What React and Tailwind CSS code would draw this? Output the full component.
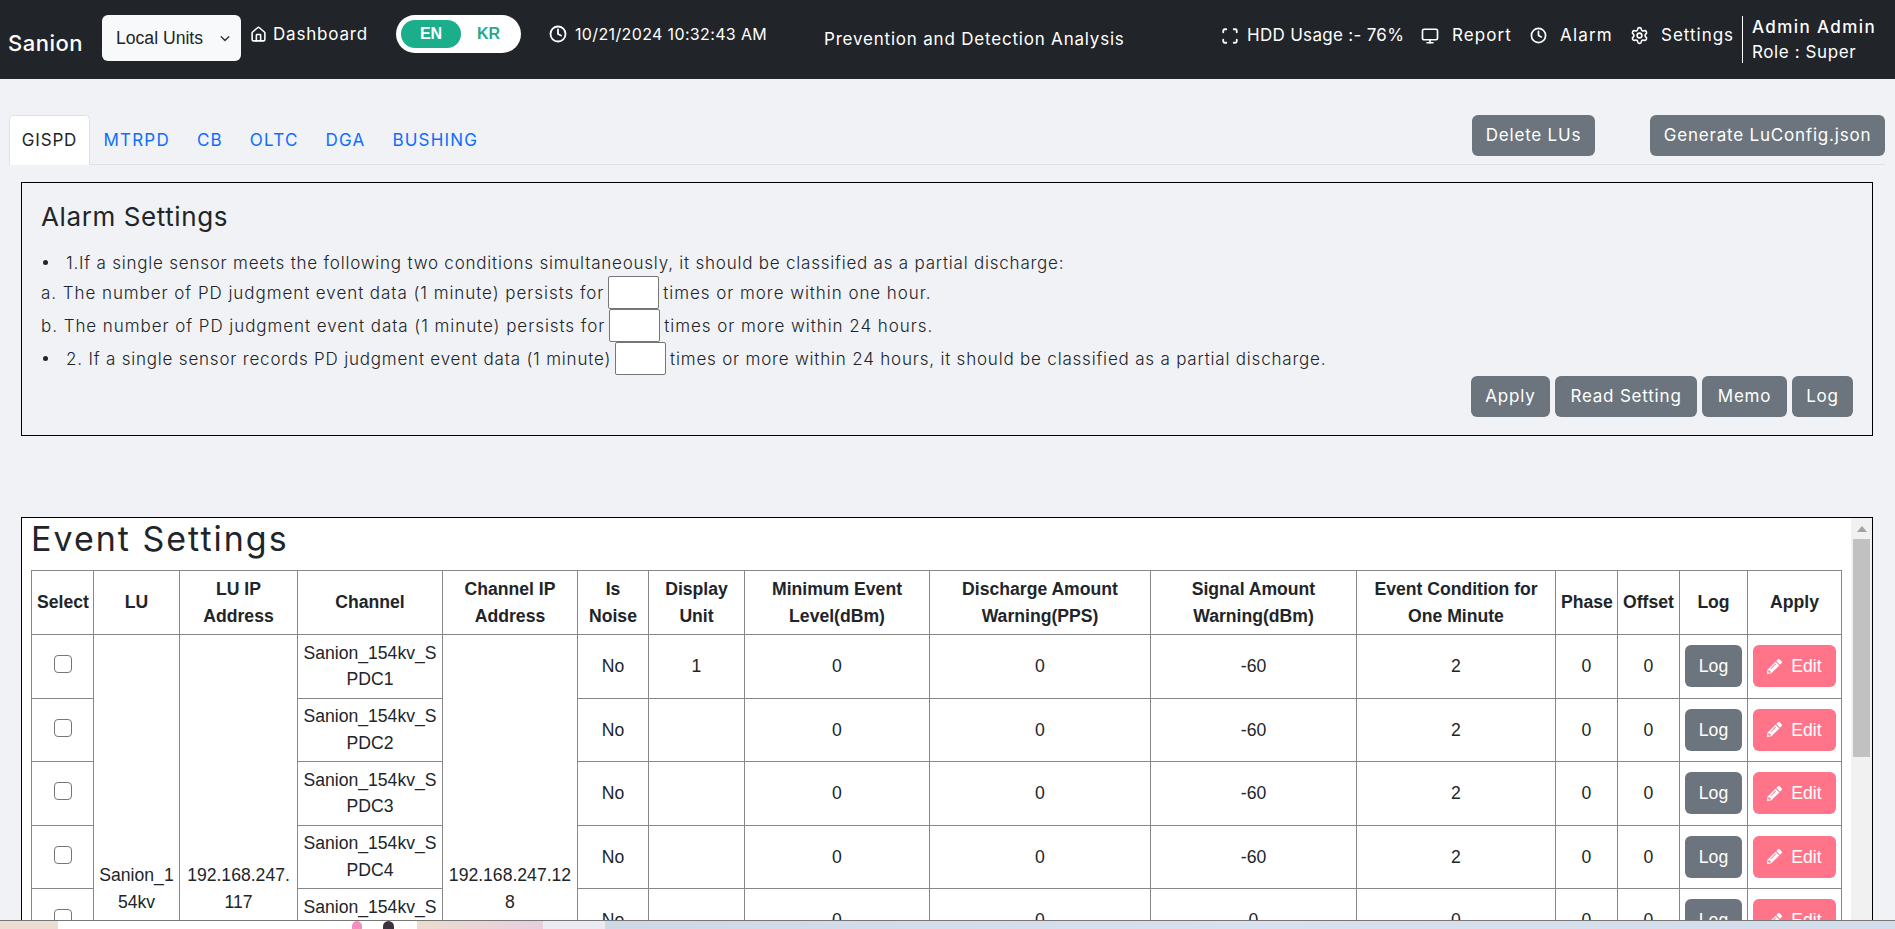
import React from "react";
import { House, Clock, Monitor, Settings, Scan } from "lucide-react";
import { FaPencilAlt } from "react-icons/fa";

const mont = "font-['Inter','Open_Sans',sans-serif]";
const tabs = ["MTRPD", "CB", "OLTC", "DGA", "BUSHING"];
const cols = ["w-[62px]","w-[86px]","w-[118px]","w-[145px]","w-[135px]","w-[71px]","w-[96px]","w-[185px]","w-[221px]","w-[206px]","w-[199px]","w-[62px]","w-[62px]","w-[68px]","w-[94px]"];
const heads = ["Select","LU","LU IP Address","Channel","Channel IP Address","Is Noise","Display Unit","Minimum Event Level(dBm)","Discharge Amount Warning(PPS)","Signal Amount Warning(dBm)","Event Condition for One Minute","Phase","Offset","Log","Apply"];
const rows = [1,2,3,4,5,6,7,8];
const td = "border border-[#888] text-center align-middle px-[5px] py-0 h-[63.5px]";

function Btn({ children, className = "" }) {
  return <button className={`h-[41px] rounded-[6px] bg-[#6c757d] text-[17px] tracking-[0.8px] text-white ${className}`}>{children}</button>;
}

export default function App() {
  return (
    <div className={`relative h-[929px] overflow-hidden bg-[#f0f2f6] text-[#212529] ${mont}`}>
      <header className="flex h-[79px] items-center bg-[#212529] text-[17px] tracking-[0.8px] text-white">
        <span className="ml-[8px] mt-[7px] w-[75px] text-[22px] font-medium tracking-[0.5px]">Sanion</span>
        <div className="mb-[3px] ml-[19px] flex h-[46px] w-[139px] items-center justify-between rounded-[6px] bg-[#f8f9fa] pl-[14px] pr-[10px] pt-[1px] font-['Liberation_Sans',sans-serif] text-[17.6px] tracking-normal text-[#212529]">
          Local Units
          <svg width="12" height="12" viewBox="0 0 16 16" fill="none" stroke="#343a40" strokeWidth="2" strokeLinecap="round" strokeLinejoin="round"><path d="m3 5 5 5 5-5" /></svg>
        </div>
        <div className="mb-[10px] ml-[9px] flex items-center gap-[6px]">
          <House size={17} strokeWidth={2.2} />
          <span className="w-[95px] whitespace-nowrap">Dashboard</span>
        </div>
        <div className="mb-[11px] ml-[28px] flex h-[38px] w-[125px] items-center rounded-full bg-white pl-[5px] font-['Liberation_Sans',sans-serif] text-[16px] font-bold tracking-normal">
          <span className="flex h-[28px] w-[60px] items-center justify-center rounded-full bg-[#1aae8b] text-white">EN</span>
          <span className="ml-[16px] text-[#2aa98a]">KR</span>
        </div>
        <div className="mb-[12px] ml-[28px] flex items-center gap-[8px]">
          <Clock size={18} strokeWidth={2.4} />
          <span className="w-[192px] whitespace-nowrap text-[16px] tracking-[0.36px]">10/21/2024 10:32:43 AM</span>
        </div>
        <span className="ml-[57px] w-[301px] whitespace-nowrap">Prevention and Detection Analysis</span>
        <div className="mb-[8px] ml-[96px] flex items-center">
          <Scan size={18} strokeWidth={2.4} />
          <span className="ml-[8px] w-[156px] whitespace-nowrap tracking-[0.3px]">HDD Usage :- 76%</span>
          <Monitor size={18} strokeWidth={2.2} className="ml-[18px]" />
          <span className="ml-[13px] w-[60px] tracking-[1.1px]">Report</span>
          <Clock size={17} strokeWidth={2.4} className="ml-[18px]" />
          <span className="ml-[13px] w-[53px] tracking-[1.2px]">Alarm</span>
          <Settings size={19} strokeWidth={2} className="ml-[17px]" />
          <span className="ml-[12px] w-[73px] tracking-[1px]">Settings</span>
        </div>
        <div className="ml-[8px] flex h-[47px] flex-col justify-between border-l border-white pl-[9px] leading-[22px]">
          <span className="whitespace-nowrap font-medium tracking-[1.4px]">Admin Admin</span>
          <span className="mt-[1px] whitespace-nowrap tracking-[0.6px]">Role : Super</span>
        </div>
      </header>

      <div className="ml-[9px] mr-[10px] mt-[36px] flex h-[50px] border-b border-[#dee2e6] text-[17px] tracking-[0.8px]">
        <div className="flex h-[50px] w-[81px] items-center justify-center rounded-t-[5px] border border-b-0 border-[#dee2e6] bg-white pt-[1px]">GISPD</div>
        {tabs.map((t) => (
          <div key={t} className="flex h-[49px] items-center px-[13.5px] pt-[3px] tracking-[1.2px] text-[#0d6efd] first:ml-[1px]">{t}</div>
        ))}
        <div className="ml-auto flex items-start">
          <Btn className="w-[123px]">Delete LUs</Btn>
          <Btn className="ml-[55px] w-[235px]">Generate LuConfig.json</Btn>
        </div>
      </div>

      <section className="ml-[21px] mt-[17px] flex h-[254px] w-[1852px] flex-col border border-black px-[19px]">
        <h2 className="mt-[17px] text-[26px] leading-[34px] tracking-[0.6px]">Alarm Settings</h2>
        <div className="mt-[15px] text-[17px] font-light leading-[24px] tracking-[0.78px]">
          <div className="flex h-[27px] items-center">
            <span className="ml-[2px] mr-[18px] h-[5px] w-[5px] rounded-full bg-[#212529]" />
            1.If a single sensor meets the following two conditions simultaneously, it should be classified as a partial discharge:
          </div>
          <div className="flex h-[33px] items-center tracking-[0.94px]">
            a. The number of PD judgment event data (1 minute) persists for
            <span className="mx-[4px] h-[33px] w-[51px] shrink-0 rounded-[2px] border border-[#767676] bg-white" />
            times or more within one hour.
          </div>
          <div className="flex h-[33px] items-center tracking-[0.94px]">
            b. The number of PD judgment event data (1 minute) persists for
            <span className="mx-[4px] h-[33px] w-[51px] shrink-0 rounded-[2px] border border-[#767676] bg-white" />
            times or more within 24 hours.
          </div>
          <div className="flex h-[33px] items-center tracking-[0.8px]">
            <span className="ml-[2px] mr-[18px] h-[5px] w-[5px] rounded-full bg-[#212529]" />
            2. If a single sensor records PD judgment event data (1 minute)
            <span className="mx-[4px] h-[33px] w-[51px] shrink-0 rounded-[2px] border border-[#767676] bg-white" />
            times or more within 24 hours, it should be classified as a partial discharge.
          </div>
        </div>
        <div className="mt-[1px] flex justify-end gap-[5px]">
          <Btn className="w-[79px]">Apply</Btn>
          <Btn className="w-[142px]">Read Setting</Btn>
          <Btn className="w-[85px]">Memo</Btn>
          <Btn className="w-[61px]">Log</Btn>
        </div>
      </section>

      <section className="relative ml-[21px] mt-[81px] h-[500px] w-[1852px] overflow-hidden border border-black bg-white pl-[9px]">
        <h2 className="h-[52px] text-[34px] leading-[42px] tracking-[2px]">Event Settings</h2>
        <table className="w-[1810px] table-fixed border-collapse font-['Liberation_Sans',sans-serif] text-[17.6px] leading-[26.4px]">
          <colgroup>{cols.map((c, i) => <col key={i} className={c} />)}</colgroup>
          <thead>
            <tr>
              {heads.map((h) => <th key={h} className="h-[64px] border border-[#888] px-[5px] py-0 text-center align-middle font-bold">{h}</th>)}
            </tr>
          </thead>
          <tbody>
            {rows.map((r) => (
              <tr key={r}>
                <td className={td}><span className="mb-[6px] inline-block h-[18px] w-[18px] rounded-[4px] border border-[#767676] bg-white align-middle" /></td>
                {r === 1 && <td rowSpan={8} className={`${td} break-all`}>Sanion_154kv</td>}
                {r === 1 && <td rowSpan={8} className={`${td} break-all`}>192.168.247.117</td>}
                <td className={`${td} break-all`}>Sanion_154kv_SPDC{r}</td>
                {r === 1 && <td rowSpan={8} className={`${td} break-all`}>192.168.247.128</td>}
                <td className={td}>No</td>
                <td className={td}>{r === 1 ? "1" : ""}</td>
                <td className={td}>0</td>
                <td className={td}>0</td>
                <td className={td}>{r < 5 ? "-60" : "0"}</td>
                <td className={td}>{r < 5 ? "2" : "0"}</td>
                <td className={td}>0</td>
                <td className={td}>0</td>
                <td className={td}>
                  <button className="h-[42px] w-[57px] rounded-[6px] bg-[#6c757d] text-white">Log</button>
                </td>
                <td className={td}>
                  <button className="inline-flex h-[42px] w-[83px] items-center justify-center gap-[9px] rounded-[6px] bg-[#ff7488] text-white">
                    <FaPencilAlt size={15} />Edit
                  </button>
                </td>
              </tr>
            ))}
          </tbody>
        </table>
        <div className="absolute right-0 top-0 flex h-full w-[21px] flex-col items-center bg-[#f1f1f1]">
          <svg className="mt-[8px]" width="10" height="6" viewBox="0 0 10 6"><path d="M5 0 10 6H0Z" fill="#a3a3a3" /></svg>
          <div className="mt-[7px] h-[218px] w-[17px] bg-[#c1c1c1]" />
        </div>
      </section>

      <div className="absolute bottom-0 left-0 flex h-[9px] w-full border-t border-[#777] bg-[#d3dcea]">
        <div className="w-[58px] bg-[#ecdcd2]" />
        <div className="relative w-[359px] bg-white">
          <span className="absolute left-[294px] top-[0px] h-[9px] w-[10px] rounded-t-full bg-[#f48fc0]" />
          <span className="absolute left-[325px] top-[0px] h-[9px] w-[11px] rounded-t-full bg-[#3b3340]" />
        </div>
        <div className="w-[126px] bg-gradient-to-r from-[#ecdccd] to-[#e6cfe0]" />
        <div className="w-[62px] bg-[#ecebf3]" />
        <div className="flex-1 bg-gradient-to-r from-[#cfd8e6] via-[#d8e2ee] to-[#d3dcea]" />
      </div>
    </div>
  );
}
